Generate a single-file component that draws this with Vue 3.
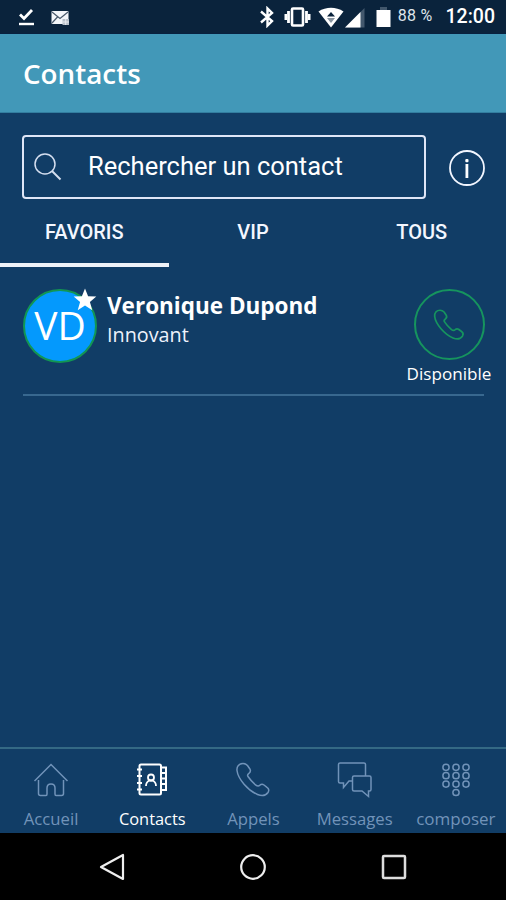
<script setup>
import { ref } from 'vue'

const activeTab = ref('FAVORIS')
const activeNav = ref('contacts')

const tabs = ['FAVORIS', 'VIP', 'TOUS']

const navItems = [
  { id: 'home', label: 'Accueil' },
  { id: 'contacts', label: 'Contacts' },
  { id: 'calls', label: 'Appels' },
  { id: 'messages', label: 'Messages' },
  { id: 'dial', label: 'composer' }
]

const contacts = [
  { name: 'Veronique Dupond', company: 'Innovant', initials: 'VD', status: 'Disponible' }
]

const keys = [0, 1, 2, 3, 4, 5, 6, 7, 8, 10]

const handset =
  'M9 2.500C5 2.500 2.500 5.500 3 9.500 4 18 14 29.500 23.500 33.500c5 2 8 1.500 10.500-2 1.500-2.500 1-3.800-1-5.200l-3-2.300c-1.800-1.400-3-.9-4.200.3-1.300 1.300-2.500 1-4.300-.5-3-2.500-5.500-5.300-7.500-8.300-.9-1.400-.5-2.200.9-3.200 1.600-1.200 2-2.500 1-4.300l-2.400-3.500C12.300 3.200 11 2.500 9 2.500z'
</script>

<template>
  <div class="screen">
    <div class="status-bar">
      <svg class="done" width="17" height="18" viewBox="0 0 17 18">
        <path d="M2 6.500l4 4L14 2" fill="none" stroke="#fff" stroke-width="2.800" />
        <path d="M1 16h15" stroke="#fff" stroke-width="2.400" />
      </svg>
      <svg class="mail" width="19" height="16" viewBox="0 0 19 16">
        <rect x="0.500" y="1" width="17" height="13" rx="1" fill="#f4f6fa" />
        <path d="M1 2l8 6.500L17 2M1 13l5.500-6" fill="none" stroke="#49596b" stroke-width="1.200" />
        <path d="M11.500 9h6.500v6h-6.500z" fill="#b8c0ca" />
        <path d="M11.500 12h6.500M14.700 9v6" stroke="#e8ebef" stroke-width="1" />
      </svg>
      <div class="system">
        <svg class="bluetooth" width="14" height="22" viewBox="0 0 14 22">
          <path d="M1 5.500l11 9.500L7.500 19.500V2.500L12 7 1 16.500" fill="none" stroke="#fff" stroke-width="2.400" />
        </svg>
        <svg class="vibrate" width="27" height="20" viewBox="0 0 27 20">
          <rect x="8" y="1.500" width="11" height="17" rx="1" fill="none" stroke="#fff" stroke-width="2.600" />
          <path d="M4.500 4v12M22.500 4v12" stroke="#fff" stroke-width="2.800" />
          <path d="M1.800 7v6M25.200 7v6" stroke="#fff" stroke-width="2.600" />
        </svg>
        <svg class="wifi" width="26" height="21" viewBox="0 0 26 21">
          <path d="M0.500 4.500C8-0.500 18-0.500 25.500 4.500L13 20.500z" fill="#fff" />
          <path d="M13 5l4 4.500H9z" fill="#0a233c" />
          <path d="M9 11h8l-4 5z" fill="#8995a1" />
        </svg>
        <svg class="signal" width="20" height="20" viewBox="0 0 20 20">
          <path d="M0 19.500L19.500 0v19.500z" fill="#43586d" />
          <path d="M0 19.500L15.500 4v15.500z" fill="#fff" />
        </svg>
        <svg class="battery" width="15" height="21" viewBox="0 0 15 21">
          <path d="M4 0h7v3H4z" fill="#42576c" />
          <rect x="0.500" y="3" width="14" height="17" fill="#fff" />
        </svg>
        <span class="percent">88 %</span>
        <span class="clock">12:00</span>
      </div>
    </div>

    <header class="header">
      <h1>Contacts</h1>
    </header>

    <main class="content">
      <div class="search-row">
        <div class="search">
          <svg width="28" height="28" viewBox="0 0 28 28" fill="none" stroke="#d4deef" stroke-width="1.500">
            <circle cx="11" cy="11" r="10" />
            <path d="M18 18l8.500 8.500" stroke-width="2" />
          </svg>
          <span>Rechercher un contact</span>
        </div>
        <svg class="info" width="38" height="38" viewBox="0 0 38 38">
          <circle cx="19" cy="19" r="17" fill="none" stroke="#f2f6ff" stroke-width="1.800" />
          <rect x="17.300" y="10" width="3.200" height="3.200" rx="1" fill="#fff" />
          <rect x="17.500" y="15" width="2.800" height="14" fill="#fff" />
        </svg>
      </div>

      <nav class="tabs">
        <button
          v-for="tab in tabs"
          :key="tab"
          class="tab"
          :class="{ active: activeTab === tab }"
          @click="activeTab = tab"
        >{{ tab }}</button>
      </nav>

      <div v-for="contact in contacts" :key="contact.name" class="contact">
        <div class="avatar">
          <span>{{ contact.initials }}</span>
          <svg class="star" width="24" height="24" viewBox="0 0 24 24">
            <path d="M12 0.500l3.100 7.700 8.200.4-6.400 5.300 2.400 8.400-7.300-4.700-7.300 4.700 2.400-8.400L.7 8.600l8.200-.4z" fill="#fff" />
          </svg>
        </div>
        <div class="details">
          <div class="name">{{ contact.name }}</div>
          <div class="company">{{ contact.company }}</div>
        </div>
        <div class="presence">
          <div class="call">
            <svg width="34" height="34" viewBox="0 0 38 38" fill="none" stroke="#16945e" stroke-width="1.900">
              <path :d="handset" />
            </svg>
          </div>
          <span>{{ contact.status }}</span>
        </div>
      </div>
    </main>

    <nav class="bottom-nav">
      <button
        v-for="item in navItems"
        :key="item.id"
        class="nav-item"
        :class="{ active: activeNav === item.id }"
        @click="activeNav = item.id"
      >
        <svg width="38" height="38" viewBox="0 0 38 38" fill="none" stroke="currentColor" stroke-width="1.500">
          <path
            v-if="item.id === 'home'"
            d="M2.500 20L19 3.500 35.500 20M6.500 19v13.500q0 2 2 2H14q1 0 1-1.500v-6c0-5.500 8-5.500 8 0v6q0 1.500 1 1.500h5.500q2 0 2-2V19"
          />
          <template v-else-if="item.id === 'contacts'">
            <rect x="6.500" y="3.500" width="21.500" height="30" rx="1.500" stroke-width="2" />
            <path d="M4 8.500h5M4 15h5M4 22h5M4 28.500h5" stroke-width="2.200" />
            <path d="M29 6.500h4v5.500h-4M29 12h4v5.500h-4M29 17.500h4V23h-4M29 23h4v6h-4" stroke-width="2" />
            <circle cx="18" cy="16.500" r="3" stroke-width="1.800" />
            <path d="M13 25c0-3 1-4.500 3.500-5.500h3C22 20.500 23 22 23 25" stroke-width="1.800" />
          </template>
          <path v-else-if="item.id === 'calls'" :d="handset" />
          <template v-else-if="item.id === 'messages'">
            <path d="M16 20h-3l-5.500 6.500V22H4q-1.500 0-1.500-1.500v-17Q2.500 2 4 2h24q1.500 0 1.500 1.500V15" />
            <path d="M18 15h15.500q1.500 0 1.500 1.500v12q0 1.500-1.500 1.500h-1v5.500L26 30h-8q-1.500 0-1.500-1.500v-12Q16.500 15 18 15z" />
          </template>
          <template v-else>
            <circle
              v-for="k in keys"
              :key="k"
              :cx="9 + (k % 3) * 10"
              :cy="6.300 + Math.floor(k / 3) * 8.400"
              r="3.100"
            />
          </template>
        </svg>
        <span>{{ item.label }}</span>
      </button>
    </nav>

    <div class="android-bar">
      <svg width="26" height="28" viewBox="0 0 26 28">
        <path d="M2 14L24 2v24z" fill="none" stroke="#eee" stroke-width="2.200" stroke-linejoin="round" />
      </svg>
      <svg width="28" height="28" viewBox="0 0 28 28">
        <circle cx="14" cy="14" r="11.800" fill="none" stroke="#eee" stroke-width="2.200" />
      </svg>
      <svg width="26" height="26" viewBox="0 0 26 26">
        <rect x="2" y="2" width="22" height="22" rx="1" fill="none" stroke="#ddd" stroke-width="2.500" />
      </svg>
    </div>
  </div>
</template>

<style>
body {
  margin: 0;
  background: #113d66;
}
</style>

<style scoped>
.screen {
  width: 506px;
  height: 900px;
  display: flex;
  flex-direction: column;
  overflow: hidden;
  background: #113d66;
  color: #fff;
  font-family: "Open Sans", "Noto Sans", sans-serif;
}

svg {
  display: block;
  flex: none;
}

button {
  border: 0;
  padding: 0;
  background: none;
  cursor: pointer;
}

.status-bar {
  box-sizing: border-box;
  height: 34px;
  flex: none;
  display: flex;
  align-items: center;
  padding: 0 11px 0 18px;
  background: #0a233c;
  border-bottom: 1px solid #08213f;
}

.mail {
  margin: 2px 0 0 16px;
}

.system {
  margin-left: auto;
  display: flex;
  align-items: center;
  font-family: Roboto, sans-serif;
}

.bluetooth {
  margin-top: 1px;
}

.vibrate {
  margin-left: 10px;
}

.wifi {
  margin: 1px 0 0 7px;
}

.signal {
  margin: 2px 0 0 1px;
}

.battery {
  margin: 1px 0 0 11px;
}

.percent {
  margin-left: 7px;
  font-size: 16px;
  letter-spacing: 0.3px;
  line-height: 20px;
  padding-bottom: 1px;
  color: #dfe5eb;
}

.clock {
  margin-left: 13px;
  font-size: 19.500px;
  font-weight: 500;
  line-height: 24px;
}

.header {
  box-sizing: border-box;
  height: 79px;
  flex: none;
  display: flex;
  align-items: center;
  padding-left: 23px;
  background: #4298b8;
  border-bottom: 1px solid #337ea0;
}

h1 {
  margin: 0;
  font-size: 27.800px;
  line-height: 36px;
  font-weight: 600;
}

.content {
  flex: 1;
}

.search-row {
  display: flex;
  align-items: center;
  justify-content: space-between;
  padding: 22px 20px 0 22px;
}

.search {
  box-sizing: border-box;
  width: 404px;
  height: 64px;
  display: flex;
  align-items: center;
  gap: 26px;
  padding-left: 10px;
  border: 2px solid #dfe6f7;
  border-radius: 4px;
  font-family: Roboto, sans-serif;
  font-size: 25.500px;
}

.search span {
  padding-bottom: 3px;
}

.info {
  margin-top: 1px;
}

.tabs {
  display: grid;
  grid-template-columns: repeat(3, 1fr);
  height: 68px;
}

.tab {
  box-sizing: border-box;
  padding-top: 1px;
  border-bottom: 4px solid transparent;
  color: #f4f7ff;
  font-family: Roboto, sans-serif;
  font-size: 20px;
  font-weight: 500;
}

.tab.active {
  border-bottom-color: #eef2f8;
}

.contact {
  box-sizing: border-box;
  height: 129px;
  display: flex;
  margin: 0 22px 0 23px;
  padding-top: 22px;
  border-bottom: 2px solid #38688f;
}

.avatar {
  position: relative;
  box-sizing: border-box;
  width: 74px;
  height: 74px;
  display: flex;
  align-items: center;
  justify-content: center;
  border: 2px solid #129653;
  border-radius: 50%;
  background: #0499fd;
  font-size: 39px;
  font-weight: 500;
}

.avatar span {
  padding-bottom: 3px;
}

.star {
  position: absolute;
  top: -3px;
  right: -2px;
}

.details {
  flex: 1;
  padding: 2px 0 0 10px;
}

.name {
  font-size: 22.500px;
  font-weight: 700;
  line-height: 30px;
  white-space: nowrap;
}

.company {
  font-size: 19.800px;
  line-height: 28px;
  color: #edf2fc;
}

.presence {
  width: 86px;
  margin-right: -8px;
  display: flex;
  flex-direction: column;
  align-items: center;
  font-size: 17.100px;
  line-height: 24px;
  gap: 2px;
}

.call {
  box-sizing: border-box;
  width: 71px;
  height: 71px;
  display: flex;
  align-items: center;
  justify-content: center;
  border: 2px solid #16945e;
  border-radius: 50%;
}

.bottom-nav {
  box-sizing: border-box;
  height: 86px;
  flex: none;
  display: grid;
  grid-template-columns: repeat(5, 1fr);
  border-top: 2px solid #346984;
}

.nav-item {
  display: flex;
  flex-direction: column;
  align-items: center;
  padding: 12px 0 0 1px;
  color: #7193b9;
  font-family: "Open Sans", "Noto Sans", sans-serif;
  font-size: 16.700px;
  line-height: 24px;
  gap: 8px;
}

.nav-item:last-child {
  font-size: 17px;
}

.nav-item.active {
  color: #fff;
}

.nav-item.active span {
  font-size: 16.400px;
  font-weight: 500;
}

.android-bar {
  height: 67px;
  flex: none;
  display: flex;
  align-items: center;
  justify-content: center;
  gap: 114px;
  background: #000;
}
</style>
